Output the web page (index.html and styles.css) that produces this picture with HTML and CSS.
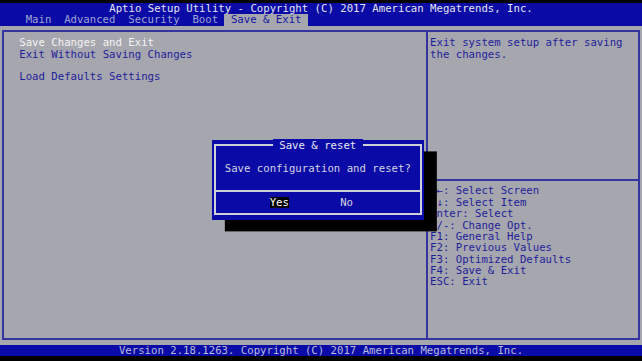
FILE: index.html
```
<!DOCTYPE html>
<html lang="en">
<head>
  <meta charset="UTF-8"/><meta name="viewport" content="width=device-width, initial-scale=1.0"/>
  <title>Aptio Setup Utility</title>
  <link rel="stylesheet" href="styles.css">
</head>
<body>
  <div class="screen">
    <div class="title">Aptio Setup Utility - Copyright (C) 2017 American Megatrends, Inc.</div>
    <nav class="tabs">
      <span>Main</span><span>Advanced</span><span>Security</span><span>Boot</span><span class="active">Save &amp; Exit</span>
    </nav>
    <main>
      <div class="box">
        <div class="menu">
          <div class="line selected">Save Changes and Exit</div>
          <div class="line">Exit Without Saving Changes</div>
          <div class="line"></div>
          <div class="line">Load Defaults Settings</div>
        </div>
        <div class="side">
          <div class="help">
            <div class="line">Exit system setup after saving</div>
            <div class="line">the changes.</div>
          </div>
          <div class="keys">
            <div class="line">→←: Select Screen</div>
            <div class="line">↑↓: Select Item</div>
            <div class="line">Enter: Select</div>
            <div class="line">+/-: Change Opt.</div>
            <div class="line">F1: General Help</div>
            <div class="line">F2: Previous Values</div>
            <div class="line">F3: Optimized Defaults</div>
            <div class="line">F4: Save &amp; Exit</div>
            <div class="line">ESC: Exit</div>
          </div>
        </div>
      </div>
    </main>
    <div class="footer">Version 2.18.1263. Copyright (C) 2017 American Megatrends, Inc.</div>

    <div class="dialog">
      <div class="frame">
        <div class="dlg-title"><span>Save &amp; reset</span></div>
        <div class="question">Save configuration and reset?</div>
        <div class="sep"></div>
        <div class="buttons">
          <span class="btn on">Yes</span>
          <span class="btn">No</span>
        </div>
      </div>
    </div>
  </div>
</body>
</html>
```
FILE: styles.css
```
*{box-sizing:border-box;}
body{margin:0;padding-top:3px;background:#000;font-family:"DejaVu Sans Mono","Liberation Mono",monospace;font-size:10.66px;line-height:11.4px;}
.screen{position:relative;width:642px;}

.title{height:11.4px;background:#0a0aa6;color:#e4e4ec;text-align:center;white-space:pre;}
.tabs{display:flex;height:11.4px;background:#0a0aa6;color:#9ea4d4;padding-left:3ch;}
.tabs span{padding:0 1ch;white-space:pre;}
.tabs .active{background:#a6a6ae;color:#1616a0;}

main{display:block;height:319.2px;background:#a6a6ae;padding:4.7px 2.2px;}
.box{display:flex;height:100%;border:2px solid #3434a0;color:#1e1e9a;}
.menu{flex:none;width:423.7px;padding:4.7px 0 0 15.06px;border-right:2px solid #3434a0;}
.line{height:11.4px;white-space:pre;}
.line.selected{color:#f4f4f4;}
.side{flex:1;display:flex;flex-direction:column;}
.help{height:148.2px;padding:4.7px 0 0 2.2px;border-bottom:2px solid #3434a0;}
.keys{padding:4.7px 0 0 2.2px;}

.footer{height:11.4px;background:#0a0aa6;color:#b8bcd8;text-align:center;white-space:pre;}

.dialog{position:absolute;left:211.86px;top:136.8px;width:211.86px;height:79.8px;padding:4.7px 2.2px;background:#0a0aa6;color:#d4d4e0;box-shadow:12.84px 11.4px 0 #000;}
.frame{height:100%;border:2px solid #d0d0dc;}
.dlg-title{margin-top:-6.7px;height:11.4px;text-align:center;}
.dlg-title span{background:#0a0aa6;padding:0 1ch;color:#e8e8f0;white-space:pre;}
.question{margin-top:11.4px;height:11.4px;text-align:center;white-space:pre;}
.sep{margin-top:16.1px;border-top:2px solid #d0d0dc;}
.buttons{display:flex;gap:8ch;margin-top:4.7px;height:11.4px;padding-left:53.6px;}
.btn{white-space:pre;}
.btn.on{background:#000;color:#fff;}
```
